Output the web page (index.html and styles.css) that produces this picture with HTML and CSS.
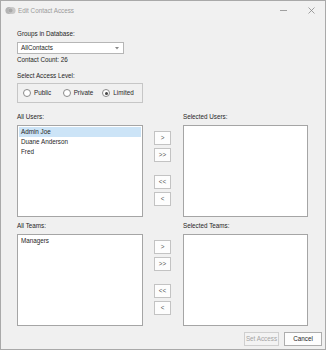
FILE: index.html
```html
<!DOCTYPE html>
<html lang="en">
<head>
    <meta charset="UTF-8">
    <title>Edit Contact Access</title>
    <link rel="stylesheet" href="styles.css">
</head>
<body>
<div class="window">
    <div class="titlebar">
        <svg class="app-icon" width="11" height="9" viewBox="0 0 11 9">
            <circle cx="4" cy="4.5" r="3.6" fill="#b4b4b4"/>
            <circle cx="7" cy="4.5" r="3.6" fill="#c8c8c8"/>
            <circle cx="5.5" cy="4.5" r="2" fill="#a8a8a8"/>
        </svg>
        <span class="title">Edit Contact Access</span>
        <span class="minimize"></span>
        <svg class="close" width="7" height="7" viewBox="0 0 7 7">
            <path d="M0.5 0.5 L6.5 6.5 M6.5 0.5 L0.5 6.5" stroke="#8a8a8a" stroke-width="0.8"/>
        </svg>
    </div>
    <div class="content">
        <div class="label first">Groups in Database:</div>
        <div class="combo">
            <span>AllContacts</span>
            <svg width="4" height="3" viewBox="0 0 4 3"><path d="M0 0 L4 0 L2 2.5 Z" fill="#888"/></svg>
        </div>
        <div class="label count">Contact Count: 26</div>
        <div class="label level">Select Access Level:</div>
        <div class="groupbox">
            <label class="radio"><span class="dot"></span>Public</label>
            <label class="radio"><span class="dot"></span>Private</label>
            <label class="radio"><span class="dot on"></span>Limited</label>
        </div>

        <div class="pick users">
            <div class="col">
                <div class="label">All Users:</div>
                <div class="list">
                    <div class="item sel">Admin Joe</div>
                    <div class="item">Duane Anderson</div>
                    <div class="item">Fred</div>
                </div>
            </div>
            <div class="arrows">
                <div class="btn">&gt;</div>
                <div class="btn">&gt;&gt;</div>
                <div class="btn spaced">&lt;&lt;</div>
                <div class="btn">&lt;</div>
            </div>
            <div class="col right">
                <div class="label">Selected Users:</div>
                <div class="list"></div>
            </div>
        </div>

        <div class="pick teams">
            <div class="col">
                <div class="label">All Teams:</div>
                <div class="list">
                    <div class="item">Managers</div>
                </div>
            </div>
            <div class="arrows">
                <div class="btn">&gt;</div>
                <div class="btn">&gt;&gt;</div>
                <div class="btn spaced">&lt;&lt;</div>
                <div class="btn">&lt;</div>
            </div>
            <div class="col right">
                <div class="label">Selected Teams:</div>
                <div class="list"></div>
            </div>
        </div>
    </div>
    <div class="footer">
        <div class="fbtn disabled">Set Access</div>
        <div class="fbtn cancel">Cancel</div>
    </div>
</div>
</body>
</html>
```

FILE: styles.css
```css
/* reset */
body,div,span,label{margin:0;padding:0}
body{
    font:6.3px/10px "Liberation Sans", Arial, sans-serif;
    color:#262626;
    background:#fff;
    width:326px;
    height:350px;
}
.window{
    width:324px;
    height:348px;
    border:1px solid #a9a9a9;
    background:#f0f0f0;
    display:flex;
    flex-direction:column;
}
.titlebar{
    height:19px;
    display:flex;
    align-items:center;
    padding-left:4px;
    background:#f1f1f1;
}
.app-icon{margin-top:-1px}
.title{
    color:#9a9a9a;
    margin-left:2px;
    flex:1;
}
.minimize{
    width:7px;
    height:1px;
    background:#a0a0a0;
    margin-right:21px;
}
.close{margin-right:10px;margin-top:-1px}
.content{
    padding:0 16px;
}
.label{height:10px}
.first{margin-top:9px}
.combo{
    margin-top:3px;
    height:10px;
    border:1px solid #b6b6b6;
    background:#fff;
    display:flex;
    align-items:center;
    justify-content:space-between;
    padding:0 4px 0 3px;
    width:98px;
}
.count{margin-top:1px}
.level{margin-top:6px}
.groupbox{
    margin-top:2px;
    height:18px;
    border:1px solid #c6c6c6;
    display:flex;
    align-items:center;
    padding-left:5px;
    width:119px;
}
.radio{
    display:flex;
    align-items:center;
    width:40px;
}
.dot{
    width:6px;
    height:6px;
    border:1px solid #8a8a8a;
    border-radius:50%;
    background:#fff;
    margin-right:3px;
    display:flex;
    align-items:center;
    justify-content:center;
}
.dot.on::after{
    content:"";
    width:3px;
    height:3px;
    border-radius:50%;
    background:#444;
}
.pick{
    display:flex;
}
.users{margin-top:9px}
.teams{margin-top:4px}
.col{
    width:126px;
    display:flex;
    flex-direction:column;
}
.col.right{width:125px}
.col .label{margin-bottom:3px}
.list{
    height:88px;
    border:1px solid #a5a5a5;
    background:#fff;
    padding:1px;
}
.item{
    height:10px;
    line-height:10px;
    padding-left:2px;
}
.item.sel{background:#cce4f7}
.arrows{
    width:17px;
    margin:19px 12px 0 11px;
    display:flex;
    flex-direction:column;
    gap:3px;
}
.btn{
    height:12px;
    border:1px solid #c3c3c3;
    background:#fdfdfd;
    display:flex;
    align-items:center;
    justify-content:center;
    color:#555;
    font-size:6.3px;
}
.btn.spaced{margin-top:10px}
.footer{
    margin-top:auto;
    margin-bottom:3px;
    display:flex;
    justify-content:flex-end;
    gap:5px;
    padding-right:3px;
}
.fbtn{
    height:12px;
    border:1px solid #adadad;
    display:flex;
    align-items:center;
    justify-content:center;
    background:#fdfdfd;
}
.fbtn.disabled{
    width:33px;
    color:#a3a3a3;
    border-color:#cfcfcf;
    background:#f3f3f3;
}
.fbtn.cancel{width:36px}
```
